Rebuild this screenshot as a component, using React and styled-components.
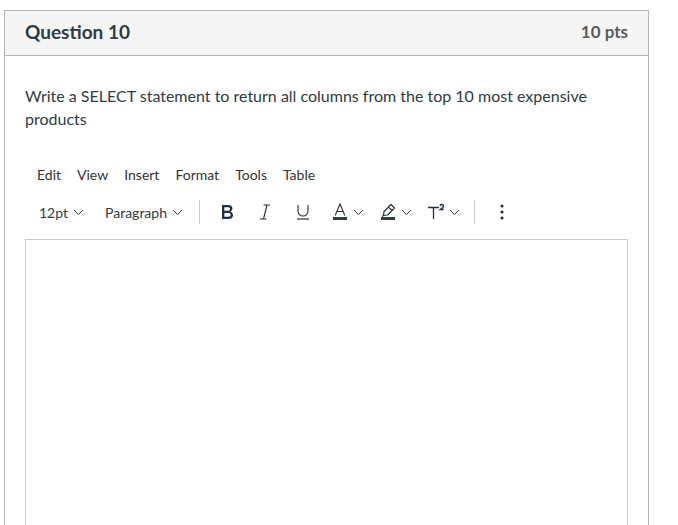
import React from 'react';
import styled, { createGlobalStyle } from 'styled-components';

const GlobalStyle = createGlobalStyle`
  html, body {
    margin: 0;
    padding: 0;
    background: #fff;
    font-family: Lato, "Noto Sans", sans-serif;
    color: #2d3b45;
  }
`;

const Page = styled.div`
  width: 678px;
  height: 525px;
  overflow: hidden;
  padding: 10px 0 0 4px;
  box-sizing: border-box;
`;

const Card = styled.div`
  width: 645px;
  border: 1px solid #b4b4b4;
  border-bottom: none;
  box-sizing: border-box;
`;

const Header = styled.div`
  height: 45px;
  background: #f5f5f5;
  border-bottom: 1px solid #b4b4b4;
  display: flex;
  align-items: center;
  justify-content: space-between;
  padding: 0 20px 3px;
  box-sizing: border-box;
`;

const Title = styled.div`
  font-size: 19px;
  font-weight: 700;
  color: #2d3b45;
`;

const Points = styled.div`
  font-size: 17px;
  font-weight: 700;
  color: #5b5b5b;
`;

const Body = styled.div`
  padding: 28px 20px 0;
`;

const Prompt = styled.p`
  margin: 0;
  font-size: 16px;
  line-height: 23px;
  color: #2d3b45;
`;

const MenuBar = styled.div`
  margin-top: 28px;
  height: 32px;
  display: flex;
  align-items: center;
  padding-left: 4px;
`;

const MenuItem = styled.span`
  font-size: 14px;
  color: #333;
  padding: 0 8px;
`;

const Toolbar = styled.div`
  height: 44px;
  display: flex;
  align-items: center;
  padding-left: 6px;
`;

const Select = styled.div`
  display: flex;
  align-items: center;
  gap: 5px;
  padding: 0 8px;
  margin-right: ${p => p.$gap || 0}px;
  font-size: 14px;
  color: #2d3b45;
`;

const Divider = styled.div`
  width: 1px;
  height: 24px;
  background: #ccc;
  margin: 0 8px;
`;

const ToolButton = styled.div`
  display: flex;
  align-items: center;
  gap: 1px;
  padding: 0 ${p => (p.$split ? 6 : 7)}px;
  height: 34px;
  color: #222f3e;
  svg {
    display: block;
  }
`;

const Editor = styled.div`
  margin-top: 5px;
  height: 300px;
  border: 1px solid #ccc;
  border-bottom: none;
`;

const Chevron = () => (
  <svg width="11" height="10" viewBox="0 0 11 10">
    <path d="M1 3l4.5 4.5L10 3" fill="none" stroke="#2d3b45" strokeWidth="1" />
  </svg>
);

const BoldIcon = () => (
  <svg width="24" height="24" viewBox="0 0 24 24">
    <path
      d="M7.8 19c-.3 0-.5 0-.6-.2l-.2-.5V5.7c0-.2 0-.4.2-.5l.6-.2h5c1.5 0 2.7.3 3.5 1 .7.6 1.1 1.4 1.1 2.5a3 3 0 0 1-.6 1.9c-.4.6-1 1-1.6 1.2.4.1.9.3 1.3.6s.8.7 1 1.2c.4.4.5 1 .5 1.6 0 1.3-.4 2.3-1.3 3-.8.7-2.1 1-3.8 1H7.8zm5-8.3c.6 0 1.2-.1 1.6-.5.4-.3.6-.7.6-1.3 0-1.1-.8-1.7-2.3-1.7H9.3v3.5h3.4zm.5 6c.7 0 1.3-.1 1.7-.4.4-.4.6-.9.6-1.5s-.2-1-.7-1.4c-.4-.3-1-.4-2-.4H9.4v3.8h4z"
      fill="#222f3e"
    />
  </svg>
);

const ItalicIcon = () => (
  <svg width="24" height="24" viewBox="0 0 24 24">
    <path d="M10.5 5h6.5M7 19h6.5M14 5l-3.5 14" fill="none" stroke="#222f3e" strokeWidth="1.1" />
  </svg>
);

const UnderlineIcon = () => (
  <svg width="24" height="24" viewBox="0 0 24 24">
    <path d="M7 5v6a5 5 0 0 0 10 0V5" fill="none" stroke="#222f3e" strokeWidth="1.1" />
    <path d="M6 19h12" stroke="#222f3e" strokeWidth="1.2" />
  </svg>
);

const TextColorIcon = () => (
  <svg width="24" height="24" viewBox="0 0 24 24">
    <path d="M7.2 15.5L12 4l4.8 11.5M8.9 11.5h6.2" fill="none" stroke="#222f3e" strokeWidth="1.1" />
    <rect x="5" y="17" width="14" height="3" fill="#2d3b45" />
  </svg>
);

const HighlightIcon = () => (
  <svg width="24" height="24" viewBox="0 0 24 24">
    <path
      d="M15 4.5l3.5 3.5-7 7-4 .5.5-4zM12.5 7l3.5 3.5M7.5 15.5L6 16.5"
      fill="none"
      stroke="#222f3e"
      strokeWidth="1.2"
      strokeLinejoin="round"
    />
    <rect x="5" y="17" width="14" height="3" fill="#2d3b45" />
  </svg>
);

const SuperscriptIcon = () => (
  <svg width="24" height="24" viewBox="0 0 24 24">
    <path d="M4 7.5h11M9.5 7.5v11.5" fill="none" stroke="#222f3e" strokeWidth="1.3" />
    <path
      d="M16 6c.2-1 .9-1.5 1.8-1.5 1 0 1.7.6 1.7 1.4 0 .7-.4 1.2-1.1 1.8L16.1 9.5h3.6"
      fill="none"
      stroke="#222f3e"
      strokeWidth="1.3"
    />
  </svg>
);

const MoreIcon = () => (
  <svg width="24" height="24" viewBox="0 0 24 24">
    <circle cx="12" cy="6" r="1.6" fill="#222f3e" />
    <circle cx="12" cy="12" r="1.6" fill="#222f3e" />
    <circle cx="12" cy="18" r="1.6" fill="#222f3e" />
  </svg>
);

const menus = ['Edit', 'View', 'Insert', 'Format', 'Tools', 'Table'];

export default function App() {
  return (
    <>
      <GlobalStyle />
      <Page>
        <Card>
          <Header>
            <Title>Question 10</Title>
            <Points>10 pts</Points>
          </Header>
          <Body>
            <Prompt>
              Write a SELECT statement to return all columns from the top 10 most expensive products
            </Prompt>
            <MenuBar>
              {menus.map(m => (
                <MenuItem key={m}>{m}</MenuItem>
              ))}
            </MenuBar>
            <Toolbar>
              <Select $gap={5}>
                12pt <Chevron />
              </Select>
              <Select>
                Paragraph <Chevron />
              </Select>
              <Divider />
              <ToolButton><BoldIcon /></ToolButton>
              <ToolButton><ItalicIcon /></ToolButton>
              <ToolButton><UnderlineIcon /></ToolButton>
              <ToolButton $split><TextColorIcon /><Chevron /></ToolButton>
              <ToolButton $split><HighlightIcon /><Chevron /></ToolButton>
              <ToolButton $split><SuperscriptIcon /><Chevron /></ToolButton>
              <Divider />
              <ToolButton><MoreIcon /></ToolButton>
            </Toolbar>
            <Editor />
          </Body>
        </Card>
      </Page>
    </>
  );
}
